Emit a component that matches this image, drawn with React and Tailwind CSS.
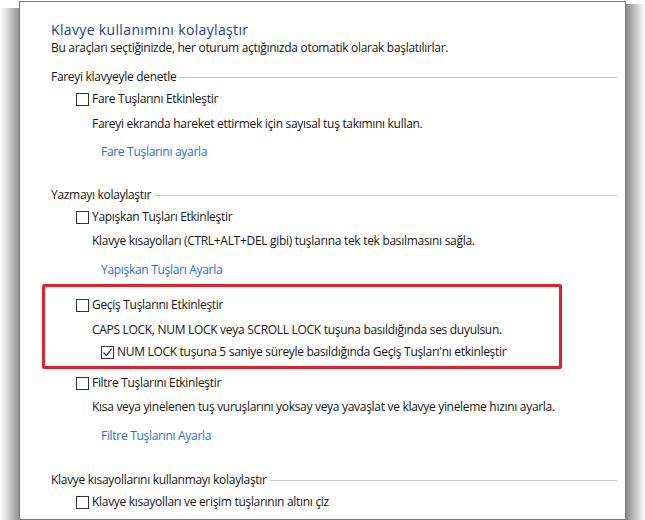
import React from "react";

const font = { fontFamily: '"Open Sans", "Noto Sans", sans-serif' };

function Box({ checked }) {
  return (
    <span className="w-[13px] h-[13px] border border-[#333333] bg-white shrink-0 flex items-center justify-center">
      {checked && (
        <svg width="11" height="11" viewBox="0 0 11 11">
          <path d="M1.5 5.5 L4.3 8.5 L9.6 1.8" fill="none" stroke="#3a3a3a" strokeWidth="1.2" />
        </svg>
      )}
    </span>
  );
}

function Check({ label, checked, cls }) {
  return (
    <div className={"flex items-center h-4 gap-[3px] " + cls}>
      <Box checked={checked} />
      <span className="whitespace-nowrap">{label}</span>
    </div>
  );
}

function Header({ label, cls }) {
  return (
    <div className={"flex items-center h-4 pl-[31px] pr-[8px] gap-[3px] " + cls}>
      <span className="whitespace-nowrap">{label}</span>
      <div className="flex-1 h-px bg-[#c8c8c8]" />
    </div>
  );
}

function Text({ children, cls }) {
  return <div className={"h-4 flex items-center whitespace-nowrap " + cls}>{children}</div>;
}

function Link({ children, cls }) {
  return <div className={"h-4 flex items-center whitespace-nowrap text-[#2a6ccf] " + cls}>{children}</div>;
}

export default function App() {
  return (
    <div className="w-[645px] h-[520px] bg-white flex overflow-hidden" style={font}>
      <div className="w-[19px] h-full flex flex-col">
        <div className="h-[8px] bg-white" />
        <div className="flex-1 bg-[linear-gradient(to_right,#ffffff_0%,#e2e2e2_30%,#a8a8a8_80%,#909090_100%)]" />
      </div>
      <div className="w-[607px] h-[519px] mt-[1px] border border-[#7a7a7a] bg-white flex flex-col text-[12px] leading-4 text-[#151515] tracking-[-0.3px]">
        <div className="mt-[19px] h-[18px] leading-[18px] flex items-center pl-[31px] text-[14px] text-[#1e3c92] whitespace-nowrap tracking-[0.35px]">
          Klavye kullanımını kolaylaştır
        </div>
        <div className="mt-[1px] h-4 leading-4 flex items-center whitespace-nowrap pl-[31px]">
          Bu araçları seçtiğinizde, her oturum açtığınızda otomatik olarak başlatılırlar.
        </div>

        <Header label="Fareyi klavyeyle denetle" cls="mt-[13px]" />
        <Check label="Fare Tuşlarını Etkinleştir" cls="mt-[6px] pl-[56px]" />
        <Text cls="mt-[9px] pl-[72px]">Fareyi ekranda hareket ettirmek için sayısal tuş takımını kullan.</Text>
        <Link cls="mt-[12px] pl-[81px]">Fare Tuşlarını ayarla</Link>

        <Header label="Yazmayı kolaylaştır" cls="mt-[27px]" />
        <Check label="Yapışkan Tuşları Etkinleştir" cls="mt-[6px] pl-[56px]" />
        <Text cls="mt-[8px] pl-[72px]">Klavye kısayolları (CTRL+ALT+DEL gibi) tuşlarına tek tek basılmasını sağla.</Text>
        <Link cls="mt-[13px] pl-[81px]">Yapışkan Tuşları Ayarla</Link>

        <div className="mt-[6px] ml-[22px] w-[520px] border-[3px] border-[#e0212b] rounded-[2px] pt-[10px] pb-[6px] flex flex-col">
          <Check label="Geçiş Tuşlarını Etkinleştir" cls="pl-[31px]" />
          <Text cls="mt-[9px] pl-[47px]">CAPS LOCK, NUM LOCK veya SCROLL LOCK tuşuna basıldığında ses duyulsun.</Text>
          <Check label="NUM LOCK tuşuna 5 saniye süreyle basıldığında Geçiş Tuşları'nı etkinleştir" checked cls="mt-[6px] pl-[56px]" />
        </div>

        <Check label="Filtre Tuşlarını Etkinleştir" cls="mt-[6px] pl-[56px]" />
        <Text cls="mt-[8px] pl-[72px]">Kısa veya yinelenen tuş vuruşlarını yoksay veya yavaşlat ve klavye yineleme hızını ayarla.</Text>
        <Link cls="mt-[13px] pl-[81px]">Filtre Tuşlarını Ayarla</Link>

        <Header label="Klavye kısayollarını kullanmayı kolaylaştır" cls="mt-[28px]" />
        <Check label="Klavye kısayolları ve erişim tuşlarının altını çiz" cls="mt-[6px] pl-[56px]" />
      </div>
      <div className="flex-1 h-full flex flex-col">
        <div className="h-[4px] bg-white" />
        <div className="flex-1 bg-[linear-gradient(to_right,#8a8a8a_0%,#b8b8b8_40%,#e8e8e8_80%,#ffffff_100%)]" />
      </div>
    </div>
  );
}
